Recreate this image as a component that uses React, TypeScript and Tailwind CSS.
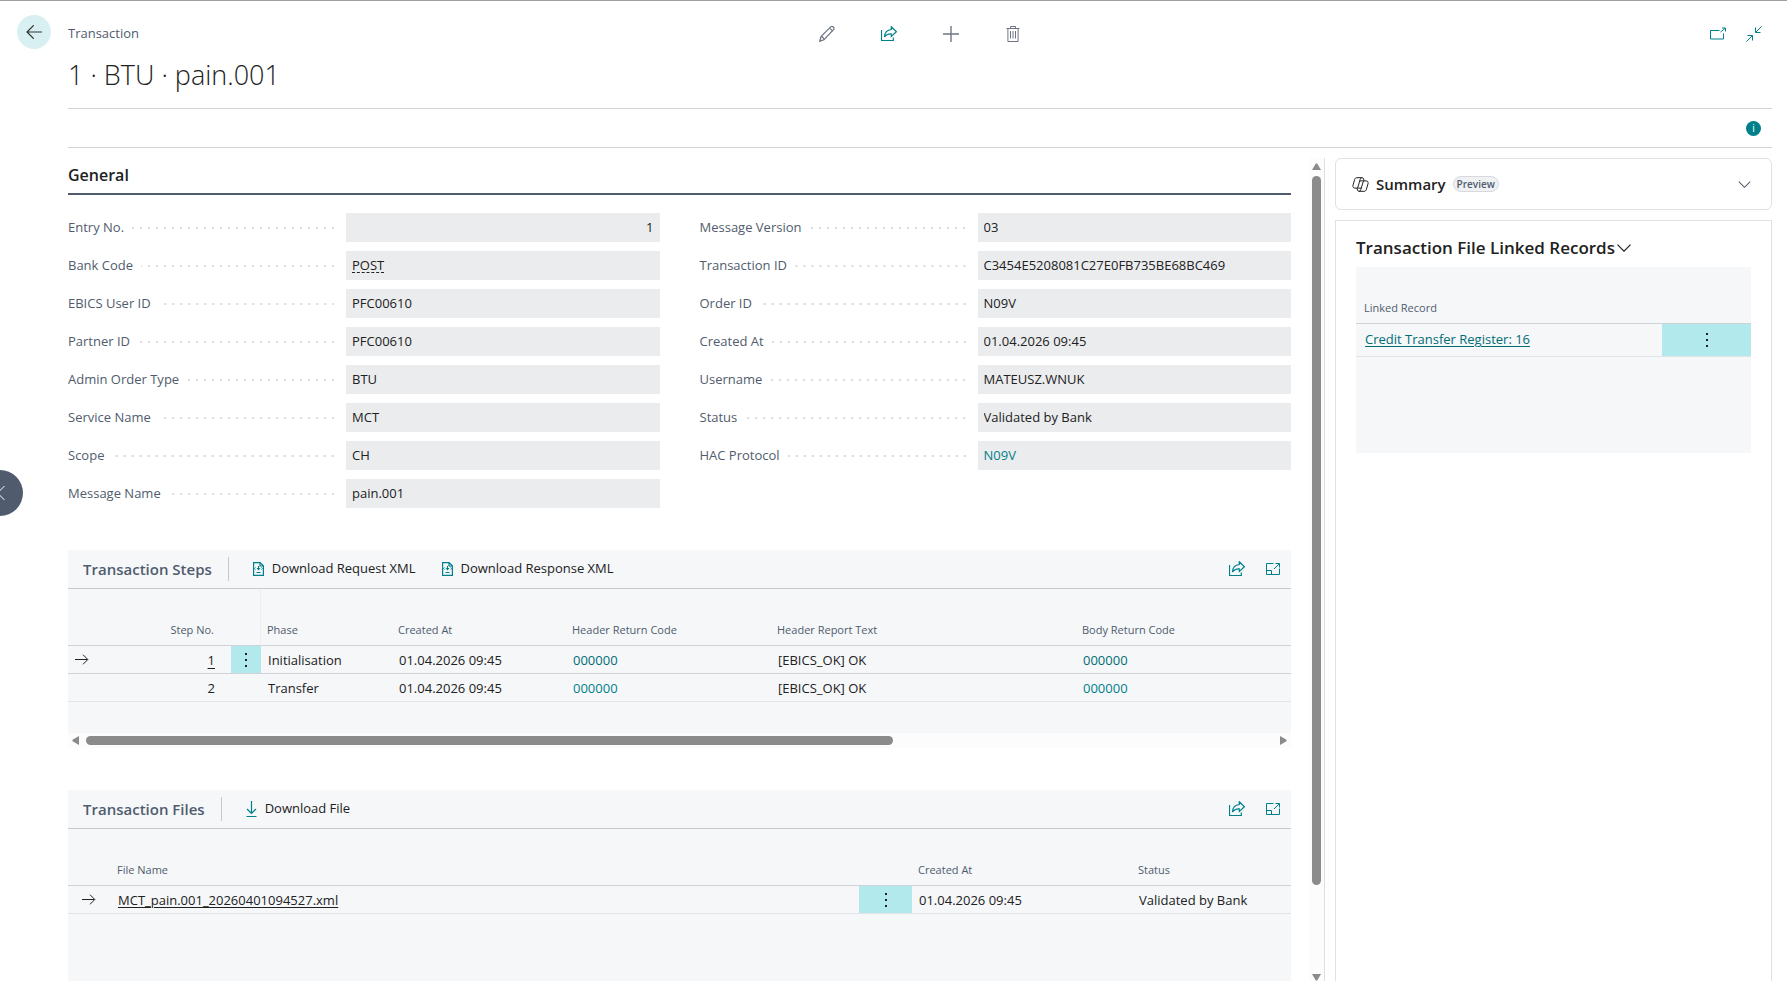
import type { ReactNode } from "react";

type Field = { label: string; value: string; kind?: "number" | "lookup" | "link" };

const leftFields: Field[] = [
  { label: "Entry No.", value: "1", kind: "number" },
  { label: "Bank Code", value: "POST", kind: "lookup" },
  { label: "EBICS User ID", value: "PFC00610" },
  { label: "Partner ID", value: "PFC00610" },
  { label: "Admin Order Type", value: "BTU" },
  { label: "Service Name", value: "MCT" },
  { label: "Scope", value: "CH" },
  { label: "Message Name", value: "pain.001" },
];

const rightFields: Field[] = [
  { label: "Message Version", value: "03" },
  { label: "Transaction ID", value: "C3454E5208081C27E0FB735BE68BC469" },
  { label: "Order ID", value: "N09V" },
  { label: "Created At", value: "01.04.2026 09:45" },
  { label: "Username", value: "MATEUSZ.WNUK" },
  { label: "Status", value: "Validated by Bank" },
  { label: "HAC Protocol", value: "N09V", kind: "link" },
];

const steps = [
  { no: "1", phase: "Initialisation", created: "01.04.2026 09:45", header: "000000", text: "[EBICS_OK] OK", body: "000000" },
  { no: "2", phase: "Transfer", created: "01.04.2026 09:45", header: "000000", text: "[EBICS_OK] OK", body: "000000" },
];

function Icon({ children, className = "size-4", box = "0 0 16 16" }: { children: ReactNode; className?: string; box?: string }) {
  return (
    <svg viewBox={box} fill="none" stroke="currentColor" strokeWidth="1" className={`block shrink-0 ${className}`} aria-hidden="true">
      {children}
    </svg>
  );
}

const PencilIcon = () => (
  <Icon>
    <path strokeWidth="1.200" d="M.7 15.3 2 10.6 11.7.9c.9-.7 1.900-.6 2.700.1s.9 1.800.1 2.700L5 13.700.7 15.300Z" />
    <path strokeWidth="1.100" d="M2 10.600c1.500.2 2.700 1.400 3 3.100M10.600 2.100l3.200 3.100M1.200 13.400l1.300 1.300" />
  </Icon>
);

const ShareIcon = ({ className }: { className?: string }) => (
  <Icon className={className}>
    <path d="M.5 4v10.500h11.800V11.500" strokeWidth="1.200" />
    <path strokeWidth="1.200" d="M10.300.8 15.400 5.700l-5.100 4.700V7.800C7 7.600 5 8.500 3.500 11 3.700 6.800 6.100 3.900 10.300 3.500V.8Z" />
  </Icon>
);

const PlusIcon = () => (
  <Icon>
    <path d="M8 0v16M0 8h16" strokeWidth="1.400" />
  </Icon>
);

const TrashIcon = () => (
  <Icon>
    <path d="M1.500 2.500h13M5.500 2V.5h5V2M2.900 3v12.500h10.200V3M5.500 5v7.500M8 5v7.500M10.500 5v7.500" />
  </Icon>
);

const PopOutIcon = () => (
  <Icon>
    <path d="M9.500 4.500H.5v8.500h13V7.500M10.500 6 15 2.500M12 2h3.500v3.500" />
  </Icon>
);

const CollapseIcon = () => (
  <Icon>
    <path d="M15.700.3 9.700 6.300M9.500 1.500v5h5M.3 15.700l6-6M1.500 9.500h5v5" />
  </Icon>
);

const ExpandIcon = () => (
  <Icon className="size-4">
    <path d="M8.500 2.500H1.500v11h13V7.500M10.500 2.500h4v4M14.300 2.700 9 8M1.500 9.500h5v4" />
  </Icon>
);

const XmlFileIcon = () => (
  <Icon className="h-[14px] w-[11px]" box="0 0 11 14">
    <path strokeWidth="1.200" d="M.6.6h6.500l3.300 3.200v9.600H.6V.6ZM7 .6V4h3.400M3.500 10.500h4" />
    <path d="M5.500 4v3.500M2.500 5.500 1.500 6.500l1 1M8.500 5.500l1 1-1 1" />
    <path d="M3.500 6h4L5.500 8.500z" fill="currentColor" stroke="none" />
  </Icon>
);

const DownloadIcon = () => (
  <Icon className="h-4 w-[11px]" box="0 0 11 16">
    <path d="M5.500 0v12M1 8l4.500 4.500L10 8M.5 15.500h10" strokeWidth="1.200" />
  </Icon>
);

const ArrowRight = () => (
  <Icon className="h-[11px] w-[14px]" box="0 0 14 11">
    <path d="M0 5.500h12.500M8 .7l4.800 4.800L8 10.300" />
  </Icon>
);

const Chevron = ({ className }: { className: string }) => (
  <Icon className={className} box="0 0 14 8">
    <path d="M.5.7 7 7.200 13.500.7" strokeWidth="1.200" />
  </Icon>
);

const MoreIcon = () => (
  <Icon className="mx-auto h-4 w-1" box="0 0 4 16">
    <path d="M1 1h2v2H1zM1 7h2v2H1zM1 13h2v2H1z" fill="currentColor" stroke="none" />
  </Icon>
);

const CopilotIcon = () => (
  <Icon className="h-[15px] w-[17px] text-[#212121]" box="0 0 17 15">
    <path
      strokeLinejoin="round"
      d="M4.900.7h5.200c.8 0 1.200.4 1.400 1.100l.6 2.100M4.900.7C3.700.7 3 1.400 2.700 2.400L1 8.200c-.5 1.700.3 2.900 1.900 2.900h1.600c.8 0 1.200-.4 1.400-1.100L8.200 2.400C8.500 1.400 9 .7 10.100.7M12.100 14.300H6.900c-.8 0-1.200-.4-1.400-1.100l-.6-2.100M12.100 14.300c1.200 0 1.900-.7 2.200-1.700L16 6.800c.5-1.700-.3-2.900-1.900-2.900h-1.600c-.8 0-1.200.4-1.400 1.100L8.800 12.600c-.3 1-.8 1.700-1.900 1.700M7.700 3.900h4.400M4.900 11.100h4.300"
    />
  </Icon>
);

function FieldRow({ field, id }: { field: Field; id: string }) {
  const kind = field.kind;
  const box = "h-[29px] w-full bg-[#ebecee] px-[6px] text-[13px] leading-[29px] text-[#212121]";
  return (
    <div className="grid grid-cols-[47%_1fr]">
      <div className="flex items-center gap-2 pr-3">
        <label htmlFor={id} className="text-[13px] text-[#505c6d]">{field.label}</label>
        <span className="h-[2px] flex-1 bg-[linear-gradient(90deg,transparent_6px,#d8dadd_6px)] bg-[length:8px_2px] bg-right bg-repeat-x" />
      </div>
      {kind === "lookup" || kind === "link" ? (
        <div className={box}>
          <a
            id={id}
            href="#record"
            className={kind === "link" ? "text-[#00808a]" : "underline decoration-dashed decoration-1 underline-offset-2"}
          >
            {field.value}
          </a>
        </div>
      ) : (
        <input id={id} readOnly value={field.value} className={`${box} outline-none ${kind === "number" ? "text-right" : ""}`} />
      )}
    </div>
  );
}

function PartHeader({ title, children }: { title: string; children: ReactNode }) {
  return (
    <div className="flex h-[39px] items-center border-b border-[#c6c9cd] pr-[10px] pl-[15px]">
      <h2 className="text-[15px] font-semibold text-[#505c6d]">{title}</h2>
      <span className="ml-4 h-6 w-px bg-[#c6c9cd]" />
      <div className="ml-6 flex items-center gap-[26px]">{children}</div>
      <div className="ml-auto flex items-center gap-5 text-[#00808a]">
        <button type="button" aria-label="Share"><ShareIcon /></button>
        <button type="button" aria-label="Expand"><ExpandIcon /></button>
      </div>
    </div>
  );
}

function Action({ icon, label }: { icon: ReactNode; label: string }) {
  return (
    <button type="button" className="flex items-center gap-2 text-[13px] text-[#212121]">
      <span className="text-[#00808a]">{icon}</span>
      {label}
    </button>
  );
}

const th = "h-[57px] border-b border-[#d0d3d6] px-[6px] pb-[7px] text-left align-bottom text-[11px] leading-4 font-normal text-[#505c6d]";
const td = "h-7 border-b px-[7px] py-0 text-[13px] leading-5 text-[#212121]";

export default function App() {
  return (
    <div className="flex h-screen flex-col overflow-hidden border-t border-[#a0a0a0] bg-white pr-[15px] font-['Open_Sans','Noto_Sans',sans-serif] text-[#212121]">
      <header className="flex gap-[17px] pt-[14px] pl-[17px]">
        <button type="button" aria-label="Back" className="flex size-[34px] shrink-0 items-center justify-center rounded-full bg-[#d9f0f2] text-[#333]">
          <Icon className="h-[14px] w-4" box="0 0 16 14">
            <path d="M.7 7H16M7.700.3 1 7l6.700 6.700" strokeWidth="1.200" />
          </Icon>
        </button>
        <div className="flex-1 border-b border-[#d0d3d6] pb-[13px]">
          <div className="grid h-[38px] grid-cols-[1fr_auto_1fr] items-center">
            <span className="text-[13px] text-[#505c6d]">Transaction</span>
            <div className="flex items-center gap-[46px] text-[#6e7683]">
              <button type="button" aria-label="Edit"><PencilIcon /></button>
              <button type="button" aria-label="Share" className="text-[#00808a]"><ShareIcon /></button>
              <button type="button" aria-label="New"><PlusIcon /></button>
              <button type="button" aria-label="Delete"><TrashIcon /></button>
            </div>
            <div className="flex items-center justify-end gap-5 pr-[10px] text-[#00808a]">
              <button type="button" aria-label="Open in new window"><PopOutIcon /></button>
              <button type="button" aria-label="Collapse"><CollapseIcon /></button>
            </div>
          </div>
          <h1 className="mt-[2px] text-[27px] leading-10 font-light">1 · BTU · pain.001</h1>
        </div>
      </header>

      <div className="ml-[68px] flex h-[39px] shrink-0 items-center justify-end border-b border-[#d0d3d6] pr-[11px]">
        <button type="button" aria-label="Details" className="flex size-[15px] items-center justify-center rounded-full bg-[#00808a] text-[10px] leading-none text-white">
          i
        </button>
      </div>

      <div className="flex min-h-0 flex-1 pl-[68px]">
        <main className="flex min-w-0 flex-1 flex-col gap-[42px] overflow-hidden pr-[18px]">
          <section className="shrink-0">
            <h2 className="border-b-2 border-[#505c6d] pt-[15px] pb-[6px] text-[16px] leading-6 font-semibold">General</h2>
            <div className="mt-[18px] grid grid-cols-2 gap-x-10">
              <div className="flex flex-col gap-[9px]">
                {leftFields.map((f, i) => <FieldRow key={f.label} field={f} id={`left-${i}`} />)}
              </div>
              <div className="flex flex-col gap-[9px]">
                {rightFields.map((f, i) => <FieldRow key={f.label} field={f} id={`right-${i}`} />)}
              </div>
            </div>
          </section>

          <section className="shrink-0">
            <div className="bg-[#f5f7f9] pb-[31px]">
              <PartHeader title="Transaction Steps">
                <Action icon={<XmlFileIcon />} label="Download Request XML" />
                <Action icon={<XmlFileIcon />} label="Download Response XML" />
              </PartHeader>
              <table className="w-full table-fixed border-separate border-spacing-0">
                <colgroup>
                  <col className="w-[30px]" />
                  <col className="w-[133px]" />
                  <col className="w-[30px]" />
                  <col className="w-[131px]" />
                  <col className="w-[174px]" />
                  <col className="w-[205px]" />
                  <col className="w-[305px]" />
                  <col />
                </colgroup>
                <thead>
                  <tr>
                    <th className={th} />
                    <th className={th}><span className="block pr-[11px] text-right">Step No.</span></th>
                    <th className={`${th} border-r border-r-[#eceef0]`} />
                    <th className={th}>Phase</th>
                    <th className={th}>Created At</th>
                    <th className={th}>Header Return Code</th>
                    <th className={th}>Header Report Text</th>
                    <th className={th}>Body Return Code</th>
                  </tr>
                </thead>
                <tbody>
                  {steps.map((s, i) => {
                    const cell = `${td} ${i === 0 ? "border-[#d0d3d6]" : "border-[#e2e5e8]"}`;
                    return (
                      <tr key={s.no}>
                        <td className={cell}>{i === 0 && <ArrowRight />}</td>
                        <td className={cell}>
                          <span className="block pr-[9px] text-right">
                            {i === 0 ? <a href="#step" className="underline underline-offset-3">{s.no}</a> : s.no}
                          </span>
                        </td>
                        <td className={`${cell} ${i === 0 ? "bg-[#b1e9ec]" : ""}`}>
                          {i === 0 && <button type="button" aria-label="More options" className="block w-full"><MoreIcon /></button>}
                        </td>
                        <td className={cell}>{s.phase}</td>
                        <td className={cell}>{s.created}</td>
                        <td className={cell}><a href="#header" className={i === 0 ? "text-[#006d75]" : "text-[#00808a]"}>{s.header}</a></td>
                        <td className={cell}>{s.text}</td>
                        <td className={cell}><a href="#body" className={i === 0 ? "text-[#006d75]" : "text-[#00808a]"}>{s.body}</a></td>
                      </tr>
                    );
                  })}
                </tbody>
              </table>
            </div>
            <div className="flex h-[15px] items-center gap-[7px] bg-[#fcfcfc] px-1 text-[#8b8b8b]">
              <Icon className="h-[9px] w-[7px]" box="0 0 7 9"><path d="M7 0v9L.5 5.200v-1.400z" fill="currentColor" stroke="none" /></Icon>
              <div className="flex-1">
                <div className="h-[9px] w-[68%] rounded-full bg-[#8b8b8b]" />
              </div>
              <Icon className="h-[9px] w-[7px]" box="0 0 7 9"><path d="M0 0v9l6.500-3.800v-1.400z" fill="currentColor" stroke="none" /></Icon>
            </div>
          </section>

          <section className="flex-1 bg-[#f5f7f9]">
            <PartHeader title="Transaction Files">
              <Action icon={<DownloadIcon />} label="Download File" />
            </PartHeader>
            <table className="w-full table-fixed border-separate border-spacing-0">
              <colgroup>
                <col className="w-[43px]" />
                <col />
                <col className="w-[53px]" />
                <col className="w-[220px]" />
                <col className="w-[159px]" />
              </colgroup>
              <thead>
                <tr>
                  <th className={th} />
                  <th className={th}>File Name</th>
                  <th className={th} />
                  <th className={th}>Created At</th>
                  <th className={th}>Status</th>
                </tr>
              </thead>
              <tbody>
                <tr>
                  <td className={`${td} border-[#e2e5e8]`}><span className="flex justify-end pr-2"><ArrowRight /></span></td>
                  <td className={`${td} border-[#e2e5e8]`}>
                    <a href="#file" className="underline underline-offset-2">MCT_pain.001_20260401094527.xml</a>
                  </td>
                  <td className={`${td} border-[#e2e5e8] bg-[#b1e9ec]`}>
                    <button type="button" aria-label="More options" className="block w-full"><MoreIcon /></button>
                  </td>
                  <td className={`${td} border-[#e2e5e8]`}>01.04.2026 09:45</td>
                  <td className={`${td} border-[#e2e5e8]`}>Validated by Bank</td>
                </tr>
              </tbody>
            </table>
          </section>
        </main>

        <div className="mt-[10px] flex w-4 shrink-0 flex-col items-center border-r border-[#dcdfe4] bg-[#fcfcfc] pt-[5px] text-[#8b8b8b]">
          <Icon className="h-[7px] w-[9px]" box="0 0 9 7"><path d="M0 7h9L5.200.5H3.800z" fill="currentColor" stroke="none" /></Icon>
          <div className="my-[6px] flex w-[9px] flex-1 flex-col">
            <div className="h-[89.5%] rounded-full bg-[#8b8b8b]" />
          </div>
          <Icon className="h-[7px] w-[9px]" box="0 0 9 7"><path d="M0 0h9L5.200 6.500H3.800z" fill="currentColor" stroke="none" /></Icon>
        </div>

        <aside className="ml-[10px] flex w-[437px] shrink-0 flex-col gap-[10px] pt-[10px]">
          <section className="flex h-[52px] shrink-0 items-center rounded-md border border-[#dfe1e6] pr-5 pl-4">
            <CopilotIcon />
            <h2 className="ml-[7px] text-[15px] font-semibold">Summary</h2>
            <span className="ml-[7px] flex h-4 items-center rounded-full border border-[#d6dae0] bg-[#eff1f3] px-[3px] text-[10px] leading-none font-semibold text-[#505c6d]">Preview</span>
            <button type="button" aria-label="Expand summary" className="ml-auto text-[#505c6d]"><Chevron className="h-[7px] w-[13px]" /></button>
          </section>
          <section className="flex-1 border border-b-0 border-[#dfe1e6] px-5 pt-[15px]">
            <h2>
              <button type="button" className="flex items-center gap-[2px] text-[17px] leading-6 font-semibold">
                Transaction File Linked Records
                <Chevron className="h-2 w-[14px]" />
              </button>
            </h2>
            <div className="mt-[7px] h-[186px] bg-[#f5f7f9]">
              <table className="w-full table-fixed border-separate border-spacing-0">
                <colgroup>
                  <col />
                  <col className="w-[89px]" />
                </colgroup>
                <thead>
                  <tr>
                    <th className={`${th} pl-2`}>Linked Record</th>
                    <th className={th} />
                  </tr>
                </thead>
                <tbody>
                  <tr>
                    <td className="h-[33px] border-b border-[#e2e5e8] py-0 pr-[6px] pl-[9px] text-[13px]">
                      <a href="#linked" className="text-[#006d75] underline underline-offset-2">Credit Transfer Register: 16</a>
                    </td>
                    <td className="h-[33px] border-b border-[#e2e5e8] bg-[#b1e9ec] py-0">
                      <button type="button" aria-label="More options" className="block w-full"><MoreIcon /></button>
                    </td>
                  </tr>
                </tbody>
              </table>
            </div>
          </section>
        </aside>
      </div>

      <button
        type="button"
        aria-label="Previous record"
        className="fixed top-[470px] left-0 flex h-[46px] w-[23px] items-center rounded-r-full bg-[#505c6d] text-white"
      >
        <Icon className="h-4 w-[5px]" box="0 0 5 16">
          <path d="M4.500 1-2.500 8l7 7" />
        </Icon>
      </button>
    </div>
  );
}
